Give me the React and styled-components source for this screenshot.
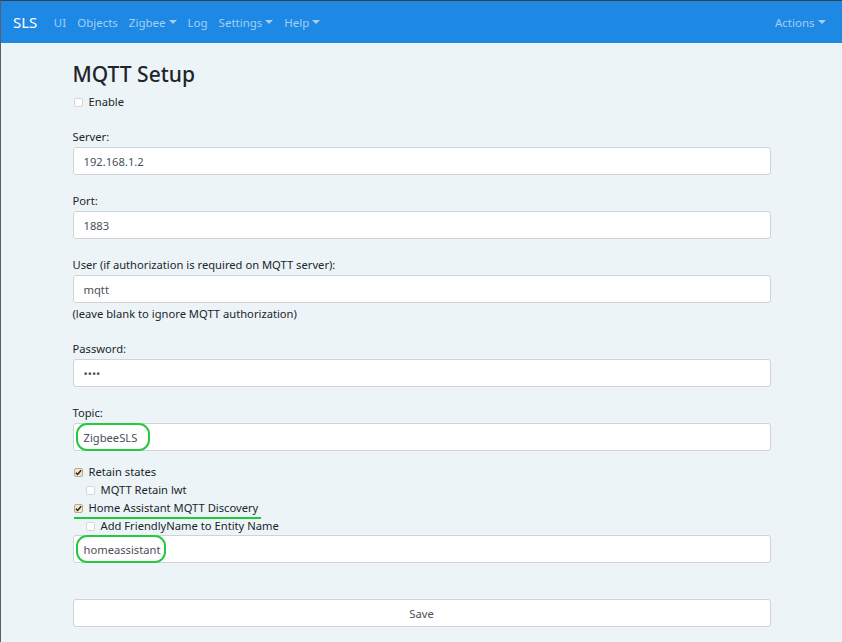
import React, { useState } from "react";
import styled, { createGlobalStyle, css } from "styled-components";

const GlobalStyle = createGlobalStyle`
  html, body { margin: 0; padding: 0; }
  body { font-family: "Noto Sans", "Open Sans", sans-serif; color: #212529; }
`;

const Page = styled.div`
  min-height: 100vh;
  background: #edf4f8;
  border-top: 1px solid #3a3f44;
  border-left: 1px solid #5a5f64;
  box-sizing: border-box;
`;

const Navbar = styled.nav`
  height: 42px;
  background: #1e88e5;
  display: flex;
  align-items: center;
  padding: 0 11px 0 12px;
`;

const Brand = styled.span`
  color: #fff;
  font-size: 15px;
  margin-right: 11px;
`;

const NavItem = styled.span`
  color: #a5cff5;
  font-size: 11.5px;
  padding: 0 5.5px;
  display: inline-flex;
  align-items: center;
  ${(p) => p.$right && css`margin-left: auto;`}
  ${(p) =>
    p.$dropdown &&
    css`
      &::after {
        content: "";
        margin-left: 3px;
        border-top: 4px solid currentColor;
        border-left: 4px solid transparent;
        border-right: 4px solid transparent;
      }
    `}
`;

const Container = styled.div`
  width: 698px;
  margin: 0 auto;
  padding: 19px 0 20px;
`;

const Title = styled.h2`
  font-size: 21px;
  font-weight: 500;
  margin: 0 0 6px;
  line-height: 25px;
`;

const Group = styled.div`
  margin-bottom: ${(p) => p.$mb ?? 17}px;
`;

const Label = styled.div`
  font-size: 11.2px;
  line-height: 18px;
  margin-bottom: 1px;
`;

const Help = styled.div`
  font-size: 11.2px;
  line-height: 18px;
  margin-top: 2px;
`;

const InputBox = styled.div`
  position: relative;
  height: 28px;
  background: #fff;
  border: 1px solid #ced4da;
  border-radius: 3px;
  box-sizing: border-box;
  display: flex;
  align-items: center;
  padding: 0 10px;
  font-size: 11.2px;
  color: #495057;
`;

const Oval = styled.span`
  position: relative;
  &::before {
    content: "";
    position: absolute;
    left: -8px;
    right: ${(p) => -(p.$extra ?? 6)}px;
    top: -7px;
    bottom: -6px;
    border: 2px solid #28c840;
    border-radius: 11px;
  }
`;

const CheckRow = styled.label`
  display: flex;
  align-items: center;
  gap: 6px;
  font-size: 11.2px;
  line-height: 18px;
  padding-left: ${(p) => (p.$nested ? 12 : 0)}px;
  position: relative;
`;

const Box = styled.span`
  width: 7px;
  height: 7px;
  border: 1px solid ${(p) => (p.$checked ? "#b9ab8c" : "#d3d6da")};
  background: ${(p) => (p.$checked ? "#f3e5c6" : "#fff")};
  border-radius: 2px;
  display: inline-flex;
  align-items: center;
  justify-content: center;
  margin-left: 1px;
`;

const Underline = styled.span`
  position: absolute;
  left: 1px;
  width: 187px;
  bottom: -2px;
  height: 2px;
  background: #1ccb3c;
`;

const CheckGroup = styled.div`
  margin-top: 12px;
  margin-bottom: 0;
`;

const SaveButton = styled.button`
  display: block;
  width: 100%;
  height: 28px;
  margin-top: 36px;
  background: #fff;
  border: 1px solid #ced4da;
  border-radius: 3px;
  font-family: inherit;
  font-size: 11.2px;
  color: #495057;
`;

const Check = ({ checked }) => (
  <Box $checked={checked}>
    {checked && (
      <svg width="7" height="7" viewBox="0 0 8 8">
        <path d="M1 4.2 L3 6.3 L7 1.5" fill="none" stroke="#222" strokeWidth="1.6" />
      </svg>
    )}
  </Box>
);

const Field = ({ label, children, help, mb }) => (
  <Group $mb={mb}>
    <Label>{label}</Label>
    <InputBox>{children}</InputBox>
    {help && <Help>{help}</Help>}
  </Group>
);

export default function App() {
  const [opts] = useState({ enable: false, retain: true, lwt: false, ha: true, friendly: false });
  return (
    <>
      <GlobalStyle />
      <Page>
        <Navbar>
          <Brand>SLS</Brand>
          <NavItem>UI</NavItem>
          <NavItem>Objects</NavItem>
          <NavItem $dropdown>Zigbee</NavItem>
          <NavItem>Log</NavItem>
          <NavItem $dropdown>Settings</NavItem>
          <NavItem $dropdown>Help</NavItem>
          <NavItem $right $dropdown>Actions</NavItem>
        </Navbar>
        <Container>
          <Title>MQTT Setup</Title>
          <Group $mb={17}>
            <CheckRow>
              <Check checked={opts.enable} /> Enable
            </CheckRow>
          </Group>
          <Field label="Server:">192.168.1.2</Field>
          <Field label="Port:">1883</Field>
          <Field
            label="User (if authorization is required on MQTT server):"
            help="(leave blank to ignore MQTT authorization)"
          >
            mqtt
          </Field>
          <Field label="Password:">••••</Field>
          <Field label="Topic:" mb={0}>
            <Oval $extra={13}>ZigbeeSLS</Oval>
          </Field>
          <CheckGroup>
            <CheckRow>
              <Check checked={opts.retain} /> Retain states
            </CheckRow>
            <CheckRow $nested>
              <Check checked={opts.lwt} /> MQTT Retain lwt
            </CheckRow>
            <CheckRow>
              <Check checked={opts.ha} /> Home Assistant MQTT Discovery
              <Underline />
            </CheckRow>
            <CheckRow $nested>
              <Check checked={opts.friendly} /> Add FriendlyName to Entity Name
            </CheckRow>
          </CheckGroup>
          <InputBox>
            <Oval>homeassistant</Oval>
          </InputBox>
          <SaveButton>Save</SaveButton>
        </Container>
      </Page>
    </>
  );
}
